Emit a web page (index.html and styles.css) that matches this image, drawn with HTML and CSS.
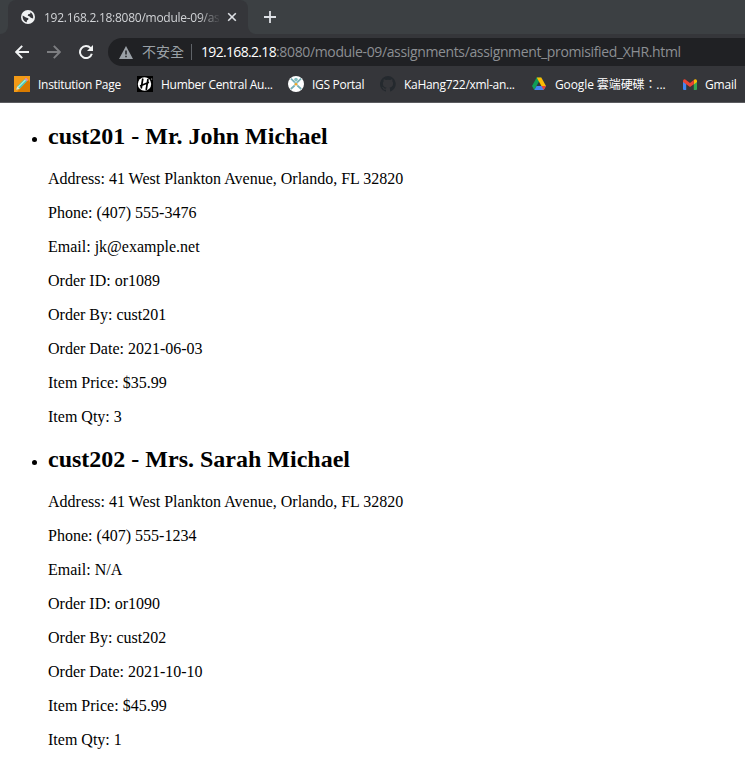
FILE: index.html
```html
<!DOCTYPE html>
<html lang="en">
<head>
<meta charset="utf-8">
<title>Customer orders</title>
<link rel="stylesheet" href="styles.css">
</head>
<body>
<header class="browser">
  <div class="tabstrip">
    <div class="left-edge"></div>
    <div class="tab">
      <svg class="globe" width="14" height="14" viewBox="0 0 14 14"><circle cx="7" cy="7" r="7" fill="#f1f3f4"/><path d="M1.7 5.6 5 7.4 7.4 8.2 7.2 9.8 5.9 10.6 5.8 12.3C3 11.8 1.3 9.3 1.7 5.6ZM7.3 1.7 9.4 2.2 9.2 3.7 7.2 4.3 6.7 5.8 8.3 6.2 9.8 7.8 12.1 8.5C12.8 5.2 10.8 1.9 7.3 1.7Z" fill="#35363a"/></svg>
      <span class="tab-title">192.168.2.18:8080/module-09/as</span>
      <svg class="close" width="10" height="10" viewBox="0 0 10 10"><path d="M1.2 1.2 8.8 8.8M8.8 1.2 1.2 8.8" stroke="#dee1e6" stroke-width="1.6"/></svg>
    </div>
    <div class="right-edge"><svg class="plus" width="12" height="12" viewBox="0 0 12 12"><path d="M6 0V12M0 6H12" stroke="#dee1e6" stroke-width="1.8"/></svg></div>
  </div>
  <div class="toolbar">
    <svg class="back" width="14" height="14" viewBox="0 0 14 14"><path d="M14 7H1.5M7.2 .8 1.2 7 7.2 13.2" fill="none" stroke="#f1f3f4" stroke-width="1.9"/></svg>
    <svg class="forward" width="14" height="14" viewBox="0 0 14 14"><path d="M0 7H12.5M6.8 .8 12.8 7 6.8 13.2" fill="none" stroke="#7d7e81" stroke-width="1.9"/></svg>
    <svg class="reload" width="14" height="14" viewBox="0 0 14 14"><path d="M11.6 3.2A6 6 0 1 0 12.8 8.7" fill="none" stroke="#f1f3f4" stroke-width="2"/><path d="M14 0V6H8Z" fill="#f1f3f4"/></svg>
    <div class="omnibox">
      <svg class="warning" width="14" height="13" viewBox="0 0 14 13"><path d="M7 0 14 13H0Z" fill="#9aa0a6"/><path d="M7 4.5V8.4M7 9.7V11.3" stroke="#202124" stroke-width="1.5"/></svg>
      <span class="insecure">不安全</span>
      <span class="divider"></span>
      <span class="host">192.168.2.18</span><span class="path">:8080/module-09/assignments/assignment_promisified_XHR.html</span>
    </div>
  </div>
  <nav class="bookmarks">
    <a class="bookmark b1"><svg width="16" height="16" viewBox="0 0 16 16"><path d="M0 0H16V16H0Z" fill="#f29a16"/><path d="M14 4 16 6V16H3Z" fill="#d97b00"/><path d="M2.2 13.8 3.3 10.3 10.7 3 13 5.3 5.7 12.7Z" fill="#49c9bf"/><path d="M4.2 11.1 11.5 3.8" stroke="#b5f2df" stroke-width="1.2"/><path d="M10.7 3 12 1.8 14.2 4 13 5.3Z" fill="#dc8abd"/><path d="M2.2 13.8 3.3 10.3 5.7 12.7Z" fill="#fae0b2"/></svg><span>Institution Page</span></a>
    <a class="bookmark b2"><svg width="16" height="16" viewBox="0 0 16 16"><path d="M0 0H16V16H0Z" fill="#000"/><circle cx="7.5" cy="8" r="6.7" fill="#fff"/><path d="M5.8 2.5 4.2 12.5M11 3 9.2 14M3 10 12 6.3" stroke="#000" stroke-width="1.7"/><circle cx="14.7" cy="3" r=".6" fill="#ddd"/></svg><span>Humber Central Au...</span></a>
    <a class="bookmark b3"><svg width="16" height="16" viewBox="0 0 16 16"><circle cx="8" cy="8" r="8" fill="#fff"/><path d="M3 2.7 7 6.6M13 2.7 9 6.6M2.8 13 6.7 9.5M13.2 13 9.3 9.5" stroke="#75afb5" stroke-width="1.7"/><circle cx="8" cy="3.6" r="1.8" fill="#83bfc0"/><path d="M6.4 5.8H9.6V9.2H6.4Z" fill="#9acaca"/><circle cx="8" cy="8.3" r="1.3" fill="#f5a623"/></svg><span>IGS Portal</span></a>
    <a class="bookmark b4"><svg width="16" height="16" viewBox="0 0 16 16"><path fill="#24292e" d="M8 0a8 8 0 0 0-2.5 15.6c.4.1.5-.2.5-.4v-1.5c-2 .4-2.6-.5-2.8-1-.1-.2-.5-1-.8-1.1-.3-.2-.7-.6 0-.6s1.1.6 1.3.8c.7 1.2 1.8.9 2.3.7.1-.5.3-.9.5-1.1-1.8-.2-3.6-.9-3.6-4 0-.9.3-1.6.8-2.1-.1-.2-.4-1 .1-2.1 0 0 .7-.2 2.2.8a7.4 7.4 0 0 1 4 0c1.5-1 2.2-.8 2.2-.8.4 1.1.2 1.9.1 2.1.5.5.8 1.2.8 2.1 0 3.1-1.9 3.8-3.6 4 .3.2.5.7.5 1.5v2.2c0 .2.1.5.5.4A8 8 0 0 0 8 0Z"/></svg><span>KaHang722/xml-an...</span></a>
    <a class="bookmark b5"><svg width="14" height="14" viewBox="0 0 14 14"><path d="M4.7 .5H9.3L7 4.6 2.3 13 0 9Z" fill="#0f9d58"/><path d="M4.7 .5H9.3L14 9H9.4Z" fill="#fbbc04"/><path d="M4.6 9H14L11.7 13H2.3Z" fill="#4285f4"/><path d="M9.4 9H14L11.7 13Z" fill="#ea4335"/></svg><span>Google 雲端硬碟：...</span></a>
    <a class="bookmark b6"><svg width="14" height="11" viewBox="0 0 14 11"><path d="M0 2V10Q0 11 1 11H3.2V4Z" fill="#4285f4"/><path d="M14 2V10Q14 11 13 11H10.8V4Z" fill="#34a853"/><path d="M10.8 1 12 .3Q14 0 14 2V3L10.8 5.4Z" fill="#fbbc04"/><path d="M0 2Q0 0 2 .3L7 4 10.8 1V5.2L7 8 3.2 5.2 0 3Z" fill="#ea4335"/></svg><span>Gmail</span></a>
  </nav>
</header>
<main>
  <ul>
    <li>
      <h2>cust201 - Mr. John Michael</h2>
      <p>Address: 41 West Plankton Avenue, Orlando, FL 32820</p>
      <p>Phone: (407) 555-3476</p>
      <p>Email: jk@example.net</p>
      <p>Order ID: or1089</p>
      <p>Order By: cust201</p>
      <p>Order Date: 2021-06-03</p>
      <p>Item Price: $35.99</p>
      <p>Item Qty: 3</p>
    </li>
    <li>
      <h2>cust202 - Mrs. Sarah Michael</h2>
      <p>Address: 41 West Plankton Avenue, Orlando, FL 32820</p>
      <p>Phone: (407) 555-1234</p>
      <p>Email: N/A</p>
      <p>Order ID: or1090</p>
      <p>Order By: cust202</p>
      <p>Order Date: 2021-10-10</p>
      <p>Item Price: $45.99</p>
      <p>Item Qty: 1</p>
    </li>
  </ul>
</main>
</body>
</html>
```
FILE: styles.css
```css
body {
  margin: 0;
  background: #fff;
  color: #000;
  font-family: "Liberation Serif", "Times New Roman", serif;
  font-size: 16px;
  overflow: hidden;
}
svg { display: block; flex: none; }

.browser {
  box-sizing: border-box;
  height: 103px;
  overflow: hidden;
  background: #35363a;
  border-bottom: 1px solid #5b5c60;
  font-family: "Open Sans", "Noto Sans CJK TC", sans-serif;
  white-space: nowrap;
}
.tabstrip { display: flex; height: 34px; }
.left-edge { width: 8px; background: #3c4043; border-bottom-right-radius: 8px; }
.tab {
  display: flex;
  align-items: center;
  box-sizing: border-box;
  width: 240px;
  padding-left: 13px;
  background: linear-gradient(#3c4043, #3c4043) top / 100% 10px no-repeat;
  position: relative;
  isolation: isolate;
}
.tab::before {
  content: "";
  position: absolute;
  inset: 0;
  z-index: -1;
  background: #35363a;
  border-radius: 8px 8px 0 0;
}
.tab-title {
  width: 175px;
  margin-left: 9px;
  font-size: 12px;
  letter-spacing: -0.26px;
  color: #d1d3d6;
  -webkit-mask-image: linear-gradient(to right, #000 155px, transparent 177px);
  mask-image: linear-gradient(to right, #000 155px, transparent 177px);
}
.close { margin-left: 8px; }
.right-edge {
  flex: 1;
  display: flex;
  align-items: center;
  padding-left: 16px;
  background: #3c4043;
  border-bottom-left-radius: 8px;
}

.toolbar { display: flex; align-items: center; height: 36px; padding-left: 15px; }
.forward { margin-left: 18px; }
.reload { margin-left: 18px; }
.omnibox {
  flex: 1;
  display: flex;
  align-items: center;
  height: 28px;
  margin-left: 15px;
  padding-left: 11px;
  background: #202124;
  border-radius: 14px 0 0 14px;
  font-size: 14px;
  line-height: 28px;
  color: #9aa0a6;
}
.insecure { width: 42px; margin-left: 9px; }
.divider { width: 1px; height: 16px; margin: 0 9px 0 7px; background: #5f6368; }
.host { color: #fff; letter-spacing: -0.67px; }
.path { color: #8c8f93; letter-spacing: -0.36px; }

.bookmarks {
  display: flex;
  align-items: center;
  height: 28px;
  font-size: 12px;
  color: #fff;
}
.bookmark { display: flex; align-items: center; gap: 8px; flex: none; letter-spacing: -0.29px; }
.b1 { width: 123px; margin-left: 14px; }
.b2 { width: 151px; }
.b3 { width: 92px; }
.b4 { width: 152px; }
.b5 { width: 151px; gap: 9px; letter-spacing: -0.1px; }
.b6 { letter-spacing: -0.2px; }

ul { margin: 0; padding-left: 48px; }
main { display: flow-root; }
h2 { margin: 19.92px 0; font-size: 24px; line-height: 27px; }
p { margin: 16px 0; line-height: 18px; }
```
